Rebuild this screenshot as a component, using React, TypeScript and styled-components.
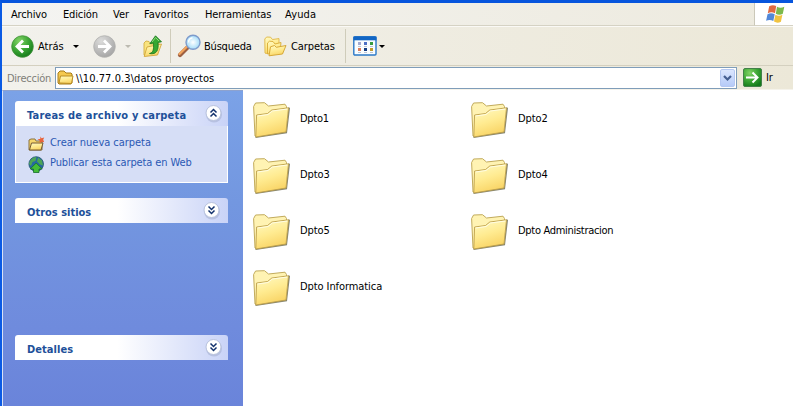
import React from 'react';
import styled, { createGlobalStyle } from 'styled-components';

const Global = createGlobalStyle`
  * { box-sizing: border-box; }
  body { margin: 0; background: #fff; overflow: hidden; }
  svg { display: block; flex: none; }
`;
const Window = styled.div`
  width: 793px; height: 406px; display: flex; flex-direction: column;
  border-top: 3px solid #0755dd; border-left: 2px solid #0a5ae4;
  background: #fff; color: #000; overflow: hidden;
  font: 11px/14px "DejaVu Sans Condensed", "DejaVu Sans", sans-serif;
`;
const Label = styled.span<{ $ls?: number; $up?: number }>`
  white-space: nowrap; letter-spacing: ${p => p.$ls ?? -0.15}px; padding-bottom: ${p => p.$up ?? 0}px;
`;
const MenuBar = styled.div`
  height: 24px; flex: none; display: flex; background: linear-gradient(90deg, #f4f4f2, #edeade);
  border-bottom: 1px solid #faf9f5;
`;
const MenuItems = styled.nav`
  flex: 1; display: flex; padding: 5px 0 0 9px; height: 23px;
  border-bottom: 1px solid #d5d2c4;
`;
const MenuItem = styled.div<{ $w: number }>`
  width: ${p => p.$w}px; flex: none;
`;
const Brand = styled.div`
  width: 39px; height: 23px; background: #fff; border-left: 1px solid #cbc8b9;
  border-bottom: 1px solid #d5d2c4; padding: 1px 0 0 10px;
`;
const ToolBar = styled.div`
  height: 39px; flex: none; display: flex; align-items: center; padding-left: 9px;
  background: linear-gradient(90deg, #f2f1ec, #ece8d8); border-bottom: 1px solid #d4d0bf;
`;
const ToolButton = styled.div<{ $w: number; $gap?: number; $indent?: number }>`
  width: ${p => p.$w}px; height: 34px; flex: none; display: flex; align-items: center;
  gap: ${p => p.$gap ?? 4}px; padding-left: ${p => p.$indent ?? 0}px;
  & > span { padding-top: 1px; }
`;
const Separator = styled.div`
  width: 1px; height: 34px; flex: none; background: #cfccba;
`;
const Caret = styled.i<{ $off?: boolean; $gap?: number }>`
  width: 0; height: 0; border: 3px solid transparent; border-bottom: 0;
  border-top-color: ${p => (p.$off ? '#bcbab0' : '#000')}; margin-left: ${p => p.$gap ?? 0}px;
`;
const AddressBar = styled.div`
  height: 24px; flex: none; display: flex; padding: 1px 0 1px 5px;
  background: linear-gradient(90deg, #f2f1ec, #ece8d8); border-bottom: 1px solid #f5f3eb;
`;
const AddressLabel = styled.div`
  width: 48px; flex: none; padding-top: 5px; color: #7f7e78;
`;
const AddressField = styled.div`
  width: 682px; height: 22px; flex: none; display: flex; align-items: center; gap: 2px;
  background: #fff; border: 1px solid #7f9db9; padding: 0 1px 0 1px;
  & > span { padding-top: 1px; }
`;
const DropButton = styled.div`
  width: 15px; height: 18px; margin-left: auto; border-radius: 2px; border: 1px solid #b5c8f2;
  background: linear-gradient(#dbe6fe, #b6cbf8); display: flex; align-items: center; justify-content: center;
`;
const Go = styled.div`
  display: flex; align-items: center; gap: 4px; padding-left: 6px;
  & > span { padding-top: 1px; }
`;
const Body = styled.div`
  flex: 1; display: flex; min-height: 0;
`;
const SideBar = styled.aside`
  width: 241px; flex: none; padding: 10px 15px 0 12px; display: flex; flex-direction: column;
  background: linear-gradient(#7ba2e7, #7397e0 35%, #6f8bdd 75%, #6a84da);
  border-left: 1px solid #d7e2f8; border-top: 1px solid #8da2cf;
`;
const Panel = styled.section<{ $after: number }>`
  width: 213px; margin-bottom: ${p => p.$after}px;
`;
const PanelHead = styled.header<{ $right: number }>`
  height: 25px; display: flex; align-items: center; justify-content: space-between;
  padding: 0 ${p => p.$right}px 0 12px; border-radius: 3px 3px 0 0; color: #215099; font-weight: 700;
  background: linear-gradient(90deg, #fff 48%, #c9d3f7);
  & > span { padding-top: 4px; }
  & > svg { margin-bottom: 1px; }
`;
const PanelBody = styled.div`
  height: 57px; border: 1px solid #fff; border-top: 0; background: #d6def6;
  padding: 7px 0 0 12px; color: #2b59b4;
`;
const Task = styled.div`
  height: 20px; display: flex; align-items: center; gap: 5px;
  & > svg { margin-top: 2px; }
`;
const Files = styled.main`
  flex: 1; display: grid; grid-template-columns: 218px 218px; grid-auto-rows: 56px;
  padding: 0 0 0 9px; align-content: start; background: #fff;
`;
const File = styled.div`
  height: 60px; display: flex; align-items: center; gap: 9px;
`;

const Defs = () => (
  <svg width="0" height="0" aria-hidden="true">
    <defs>
      <linearGradient id="fold" x1="0" y1="0" x2=".35" y2="1"><stop stopColor="#fffbc6" /><stop offset=".55" stopColor="#ffeb91" /><stop offset="1" stopColor="#f9d567" /></linearGradient>
      <radialGradient id="green" cx=".35" cy=".25" r=".8"><stop stopColor="#82d365" /><stop offset=".55" stopColor="#3ba534" /><stop offset="1" stopColor="#147a1b" /></radialGradient>
      <radialGradient id="grey" cx=".35" cy=".25" r=".8"><stop stopColor="#dcdcdb" /><stop offset="1" stopColor="#a4a4a4" /></radialGradient>
      <radialGradient id="lens"><stop stopColor="#fff" /><stop offset="1" stopColor="#a4dcf8" /></radialGradient>
    </defs>
  </svg>
);
const BigFolder = () => (
  <svg width="39" height="38" viewBox="0 0 39 38">
    <path d="M3.5 37 35 32.2 38 7 36.5 6 34 30 3.5 35z" fill="#66664e" opacity=".8" />
    <path d="M3 35 1.6 5.5 3.6 2 12.5 1.7 16.5 5 33 3.2 34.5 5.5 33 29z" fill="#fff3b3" stroke="#c2ab5c" />
    <path d="M3.8 36 4.6 14 15.5 12.5 19.8 9 36.5 6.8 34 31z" fill="url(#fold)" stroke="#bd9f49" strokeWidth=".9" />
    <path d="M5.5 15 16 13.5 20.3 10 35.4 8" fill="none" stroke="#fffde4" />
  </svg>
);
const SmallFolder = () => (
  <svg width="17" height="16" viewBox="0 0 17 16">
    <path d="M1 13V3l2-2h4l2 2h5l1 1v9l-1 1H2z" fill="#f5c94f" stroke="#a77d19" />
    <path d="M2 13 3.5 6H16l-1.5 7.5z" fill="url(#fold)" stroke="#b98d24" />
  </svg>
);
const NavIcon = ({ back }: { back?: boolean }) => (
  <svg width="23" height="23" viewBox="0 0 23 23">
    <circle cx="11.5" cy="11.5" r="10.8" fill={back ? 'url(#green)' : 'url(#grey)'} stroke={back ? '#44923b' : '#b1b1af'} strokeWidth=".8" />
    <path d={back ? 'M18 11.5H6M12 5.5l-6 6 6 6' : 'M5 11.5H17M11 5.5l6 6-6 6'} fill="none" stroke="#fff" strokeWidth="2.8" />
  </svg>
);
const UpIcon = () => (
  <svg width="20" height="23" viewBox="0 0 20 23">
    <path d="M1 20V8l2-2 3 .5L8 9l8-1-2 11z" fill="#f9e37e" stroke="#d2ae42" strokeWidth=".9" />
    <path d="M1.2 21.5 4 12l14.5-3-4 11z" fill="url(#fold)" stroke="#d1a63c" strokeWidth=".9" />
    <path d="M6.5 18.5c3.6-.8 4.6-4 3.8-10.5L6.8 8.8 12.5.8l6 6-3.6.7c1.2 7-1.2 12.6-8.4 11z" fill="#35a832" stroke="#16741c" strokeWidth=".8" />
    <path d="M9 7 12.5 2.6 16 6" fill="none" stroke="#94dd7c" />
  </svg>
);
const SearchIcon = () => (
  <svg width="25" height="24" viewBox="0 0 25 24">
    <path d="m3 21 7.5-7.5" stroke="#9d6042" strokeWidth="4.2" strokeLinecap="round" />
    <path d="m2.5 20 7.3-7.3" stroke="#f3a55d" strokeWidth="2.2" strokeLinecap="round" />
    <circle cx="16" cy="8.3" r="7" fill="url(#lens)" stroke="#7f9bcb" strokeWidth="1.4" />
    <path d="M11.5 8.5q0-4 4-4.8" fill="none" stroke="#fff" strokeWidth="1.4" />
  </svg>
);
const FoldersIcon = () => (
  <svg width="23" height="21" viewBox="0 0 23 21">
    <path d="M1 17 .8 3l1.8-2 4 .2L8.5 3.5 15 2.6V14L2 17.5z" fill="url(#fold)" stroke="#dfb544" strokeWidth=".9" />
    <path d="M3.5 18V7l2-1.8 3.5.3L11 8l6-1.5-1 10z" fill="url(#fold)" stroke="#d8aa34" strokeWidth=".9" />
    <path d="m5 19.8 1.5-9 4-1.3 1.8 1.8L22 9.5 18.5 18z" fill="url(#fold)" stroke="#d3a22b" strokeWidth=".9" />
  </svg>
);
const dots: [string, number, number][] = [['#a3a9d0', 5, 6], ['#4d70c4', 11, 6], ['#389b3e', 17, 6], ['#dd7b59', 5, 12], ['#123b80', 11, 12], ['#c29b2b', 17, 12]];
const ViewIcon = () => (
  <svg width="24" height="20" viewBox="0 0 24 20">
    <rect x=".8" y=".8" width="22.2" height="18.2" rx="1" fill="#f9fdff" stroke="#2a78c8" strokeWidth="1.4" />
    <path d="M.5 2.5h23" stroke="#1266c4" strokeWidth="3.6" />
    {dots.map(([c, x, y]) => (
      <g key={c}><rect x={x} y={y} width="3" height="3" fill={c} /><path d={`M${x} ${y + 4.5}h3`} stroke="#bcc4d4" /></g>
    ))}
  </svg>
);
const FlagIcon = () => (
  <svg width="22" height="20" viewBox="0 0 22 20">
    <path d="M4.2 2.2q3.5-2 7-.2L10 9.2q-3.5-2-7.2 0z" fill="#e06a42" />
    <path d="M12 2.7q3.5 2 7.3 0l-1.5 7.1q-3.5 2-7 0z" fill="#7cb94b" />
    <path d="M2.5 10.2q3.5-2 7.2 0L8.3 17q-3.5-2-7.2-.2z" fill="#5288d8" />
    <path d="M10.4 10.8q3.5 2 7 0l-1.5 7q-3.5 2-6.9-.2z" fill="#f0c341" />
  </svg>
);
const GoIcon = () => (
  <svg width="19" height="19" viewBox="0 0 19 19">
    <rect x=".5" y=".5" width="18" height="18" rx="1.5" fill="url(#green)" stroke="#43804a" />
    <path d="M3 9.5h11.5M9.5 4.5l5 5-5 5" fill="none" stroke="#fff" strokeWidth="2" />
  </svg>
);
const NewFolderIcon = () => (
  <svg width="17" height="16" viewBox="0 0 17 16">
    <path d="M1 14V4l2-1h4l1 2h6v9z" fill="#f6d66d" stroke="#8a7242" />
    <path d="m1.5 14 2-7H15l-2 7z" fill="url(#fold)" stroke="#765b32" />
    <path d="m12.5 .5 1 1.8 2.7-.8-1 2.3 1 2.4-2.6-.5-1.8 1.5-.2-2.8L9.5 3h2.7z" fill="#e8633a" />
  </svg>
);
const PublishIcon = () => (
  <svg width="17" height="17" viewBox="0 0 17 17">
    <circle cx="8.2" cy="8" r="7.3" fill="#2668a4" stroke="#26566e" strokeWidth=".8" />
    <path d="M2 5q2.5-4 6.500-4l-1 4-3 1-1.500 4-2-2zM10 1.500l4 3 1 5-3-1-3-3z" fill="#4ea655" />
    <path d="m8.200 7 6 6h-3.200v3.500H5.500V13H2.200z" fill="#45bd37" stroke="#176f2c" strokeWidth=".8" />
  </svg>
);
const Toggle = ({ up }: { up?: boolean }) => (
  <svg width="19" height="19" viewBox="0 0 19 19">
    <circle cx="10" cy="10.5" r="8" fill="#8995b7" opacity=".35" />
    <circle cx="9.5" cy="9" r="7.5" fill="#fff" stroke="#b8c2dd" />
    <path d={up ? 'm6.5 8.5 3-3 3 3m-6 4 3-3 3 3' : 'm6.5 5.5 3 3 3-3m-6 4 3 3 3-3'} fill="none" stroke="#12316c" strokeWidth="1.5" />
  </svg>
);

const menus: [string, number, number][] = [['Archivo', 52, -0.15], ['Edición', 50, -0.15], ['Ver', 31, 0], ['Favoritos', 61, 0], ['Herramientas', 80, -0.1], ['Ayuda', 40, 0.15]];
const folders: [string, number][] = [['Dpto1', -0.3], ['Dpto2', -0.1], ['Dpto3', -0.1], ['Dpto4', -0.1], ['Dpto5', -0.1], ['Dpto Administracion', -0.3], ['Dpto Informatica', -0.08]];

export default function App() {
  return (
    <Window>
      <Global />
      <MenuBar>
        <MenuItems>{menus.map(([t, w, s]) => <MenuItem key={t} $w={w}><Label $ls={s}>{t}</Label></MenuItem>)}</MenuItems>
        <Brand><FlagIcon /></Brand>
      </MenuBar>
      <ToolBar>
        <ToolButton $w={82}><NavIcon back /><Label $ls={0}>Atrás</Label><Caret $gap={5} /></ToolButton>
        <ToolButton $w={50} $gap={9}><NavIcon /><Caret $off /></ToolButton>
        <ToolButton $w={27}><UpIcon /></ToolButton>
        <Separator />
        <ToolButton $w={92} $gap={2} $indent={6}><SearchIcon /><Label $ls={-0.2}>Búsqueda</Label></ToolButton>
        <ToolButton $w={82} $indent={1}><FoldersIcon /><Label $ls={-0.1}>Carpetas</Label></ToolButton>
        <Separator />
        <ToolButton $w={45} $indent={7} $gap={2}><ViewIcon /><Caret /></ToolButton>
      </ToolBar>
      <AddressBar>
        <AddressLabel><Label $ls={-0.25}>Dirección</Label></AddressLabel>
        <AddressField>
          <SmallFolder /><Label $ls={0.07}>\\10.77.0.3\datos proyectos</Label>
          <DropButton><svg width="9" height="7" viewBox="0 0 9 7"><path d="m1 1 3.5 3.5L8 1" fill="none" stroke="#455f91" strokeWidth="2.2" /></svg></DropButton>
        </AddressField>
        <Go><GoIcon /><Label>Ir</Label></Go>
      </AddressBar>
      <Body>
        <SideBar>
          <Panel $after={15}>
            <PanelHead $right={5}><Label $ls={0.2}>Tareas de archivo y carpeta</Label><Toggle up /></PanelHead>
            <PanelBody>
              <Task><NewFolderIcon /><Label $ls={-0.04}>Crear nueva carpeta</Label></Task>
              <Task><PublishIcon /><Label $ls={-0.12}>Publicar esta carpeta en Web</Label></Task>
            </PanelBody>
          </Panel>
          <Panel $after={112}><PanelHead $right={7}><Label $ls={0}>Otros sitios</Label><Toggle /></PanelHead></Panel>
          <Panel $after={0}><PanelHead $right={5}><Label $ls={0.05}>Detalles</Label><Toggle /></PanelHead></Panel>
        </SideBar>
        <Files>{folders.map(([name, ls]) => <File key={name}><BigFolder /><Label $ls={ls} $up={2}>{name}</Label></File>)}</Files>
      </Body>
      <Defs />
    </Window>
  );
}
